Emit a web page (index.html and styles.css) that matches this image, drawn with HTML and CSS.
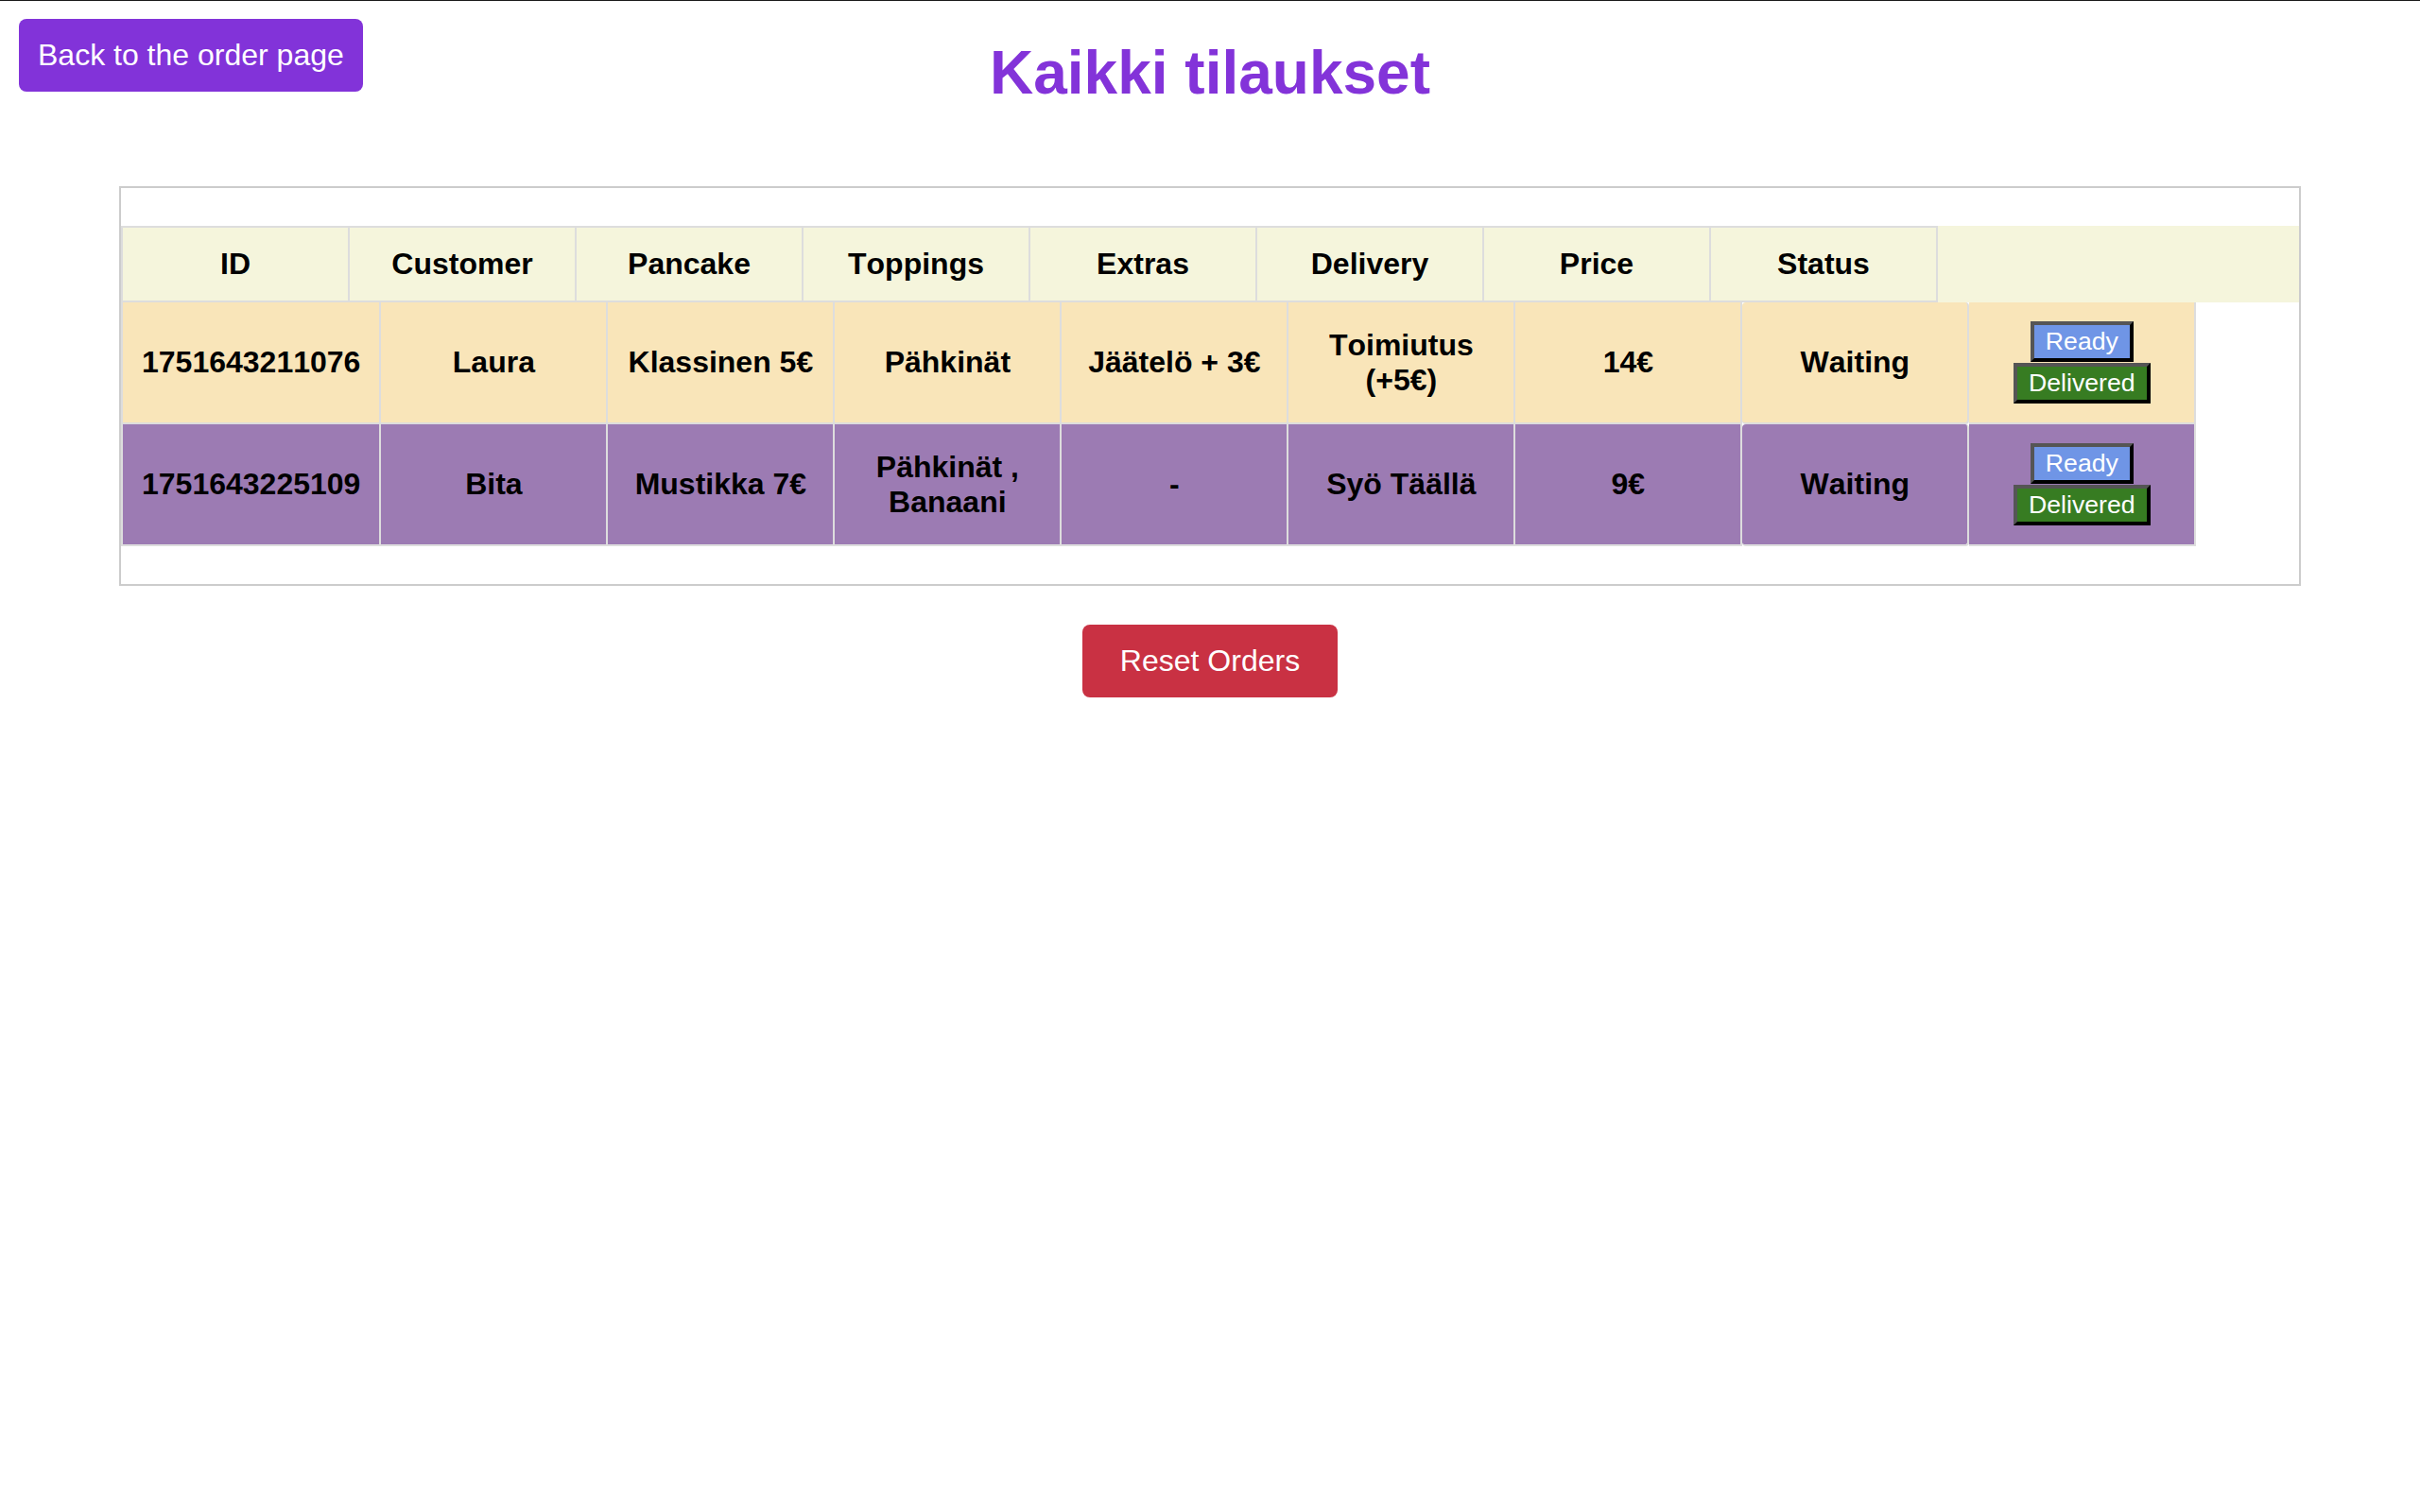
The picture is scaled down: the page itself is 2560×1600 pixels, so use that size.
FILE: index.html
```html
<!DOCTYPE html>
<html lang="fi">
<head>
<meta charset="utf-8">
<title>Kaikki tilaukset</title>
<link rel="stylesheet" href="styles.css">
</head>
<body>
<header class="top">
  <button class="back-btn" type="button">Back to the order page</button>
  <h1 class="title">Kaikki tilaukset</h1>
  <span class="top-spacer"></span>
</header>
<main>
  <div class="orders-box">
    <table class="orders">
      <thead>
        <tr>
          <th>ID</th>
          <th>Customer</th>
          <th>Pancake</th>
          <th>Toppings</th>
          <th>Extras</th>
          <th>Delivery</th>
          <th>Price</th>
          <th>Status</th>
        </tr>
      </thead>
      <tbody>
        <tr class="row-a">
          <td class="id">1751643211076</td>
          <td>Laura</td>
          <td>Klassinen 5€</td>
          <td>Pähkinät</td>
          <td>Jäätelö + 3€</td>
          <td>Toimiutus (+5€)</td>
          <td>14€</td>
          <td class="status">Waiting</td>
          <td>
            <div class="status-actions">
              <button class="ready" type="button">Ready</button>
              <button class="delivered" type="button">Delivered</button>
            </div>
          </td>
        </tr>
        <tr class="row-b">
          <td class="id">1751643225109</td>
          <td>Bita</td>
          <td>Mustikka 7€</td>
          <td>Pähkinät , Banaani</td>
          <td>-</td>
          <td>Syö Täällä</td>
          <td>9€</td>
          <td class="status">Waiting</td>
          <td>
            <div class="status-actions">
              <button class="ready" type="button">Ready</button>
              <button class="delivered" type="button">Delivered</button>
            </div>
          </td>
        </tr>
      </tbody>
    </table>
  </div>
  <div class="actions">
    <button class="reset-btn" type="button">Reset Orders</button>
  </div>
</main>
</body>
</html>
```

FILE: styles.css
```css
* {
  box-sizing: border-box;
}

html,
body {
  margin: 0;
  padding: 0;
}

body {
  font-family: "Liberation Sans", Arial, sans-serif;
  background: #ffffff;
  color: #000000;
  border-top: 1px solid #1a1a1a;
}

.top {
  display: grid;
  grid-template-columns: 1fr auto 1fr;
  align-items: start;
  padding: 19px 20px 0;
}

.back-btn {
  justify-self: start;
  background: #8233d9;
  color: #ffffff;
  border: none;
  border-radius: 8px;
  font-family: "Liberation Sans", Arial, sans-serif;
  font-size: 32px;
  line-height: normal;
  padding: 20px;
  cursor: pointer;
}

.title {
  margin: 20px 0 0;
  font-size: 64px;
  font-weight: bold;
  line-height: normal;
  color: #8333d9;
  text-align: center;
}

.orders-box {
  box-sizing: content-box;
  width: 90%;
  margin: 83px auto 0;
  border: 2px solid #cccccc;
  padding: 40px 0;
}

.orders {
  display: block;
  border-collapse: separate;
  border-spacing: 0;
  font-kerning: none;
}

.orders thead,
.orders tbody {
  display: block;
}

.orders tr {
  display: flex;
}

.orders thead tr {
  background: #f5f5dc;
}

.orders th,
.orders td {
  display: flex;
  align-items: center;
  justify-content: center;
  text-align: center;
  flex: none;
  width: 240px;
  padding: 20px;
  border-right: 2px solid #dddddd;
  border-bottom: 2px solid #dddddd;
  font-size: 32px;
  font-weight: bold;
  line-height: normal;
}

.orders th {
  border-top: 2px solid #dddddd;
  background: #f5f5dc;
}

.orders th:first-child,
.orders td:first-child {
  border-left: 2px solid #dddddd;
  width: 242px;
}

.orders td.id {
  width: auto;
  min-width: 242px;
}

.row-a td {
  background: #f9e5b9;
}

.row-b td {
  background: #9c7bb3;
}

.orders td.status {
  border-radius: 4px;
}

.status-actions {
  display: flex;
  flex-direction: column;
  align-items: center;
  gap: 1px;
}

.ready,
.delivered {
  font-family: "Liberation Sans", Arial, sans-serif;
  font-size: 26.67px;
  font-weight: normal;
  line-height: normal;
  color: #ffffff;
  padding: 2px 12px;
  border-style: solid;
  border-width: 4px;
  border-color: #555555 #000000 #000000 #555555;
  border-radius: 0;
  cursor: pointer;
}

.ready {
  background: #6f95e6;
}

.delivered {
  background: #377c22;
}

.actions {
  display: flex;
  justify-content: center;
  margin-top: 41px;
}

.reset-btn {
  background: #c93143;
  color: #ffffff;
  border: none;
  border-radius: 8px;
  font-family: "Liberation Sans", Arial, sans-serif;
  font-size: 32px;
  line-height: normal;
  padding: 20px 40px;
  cursor: pointer;
}
```
